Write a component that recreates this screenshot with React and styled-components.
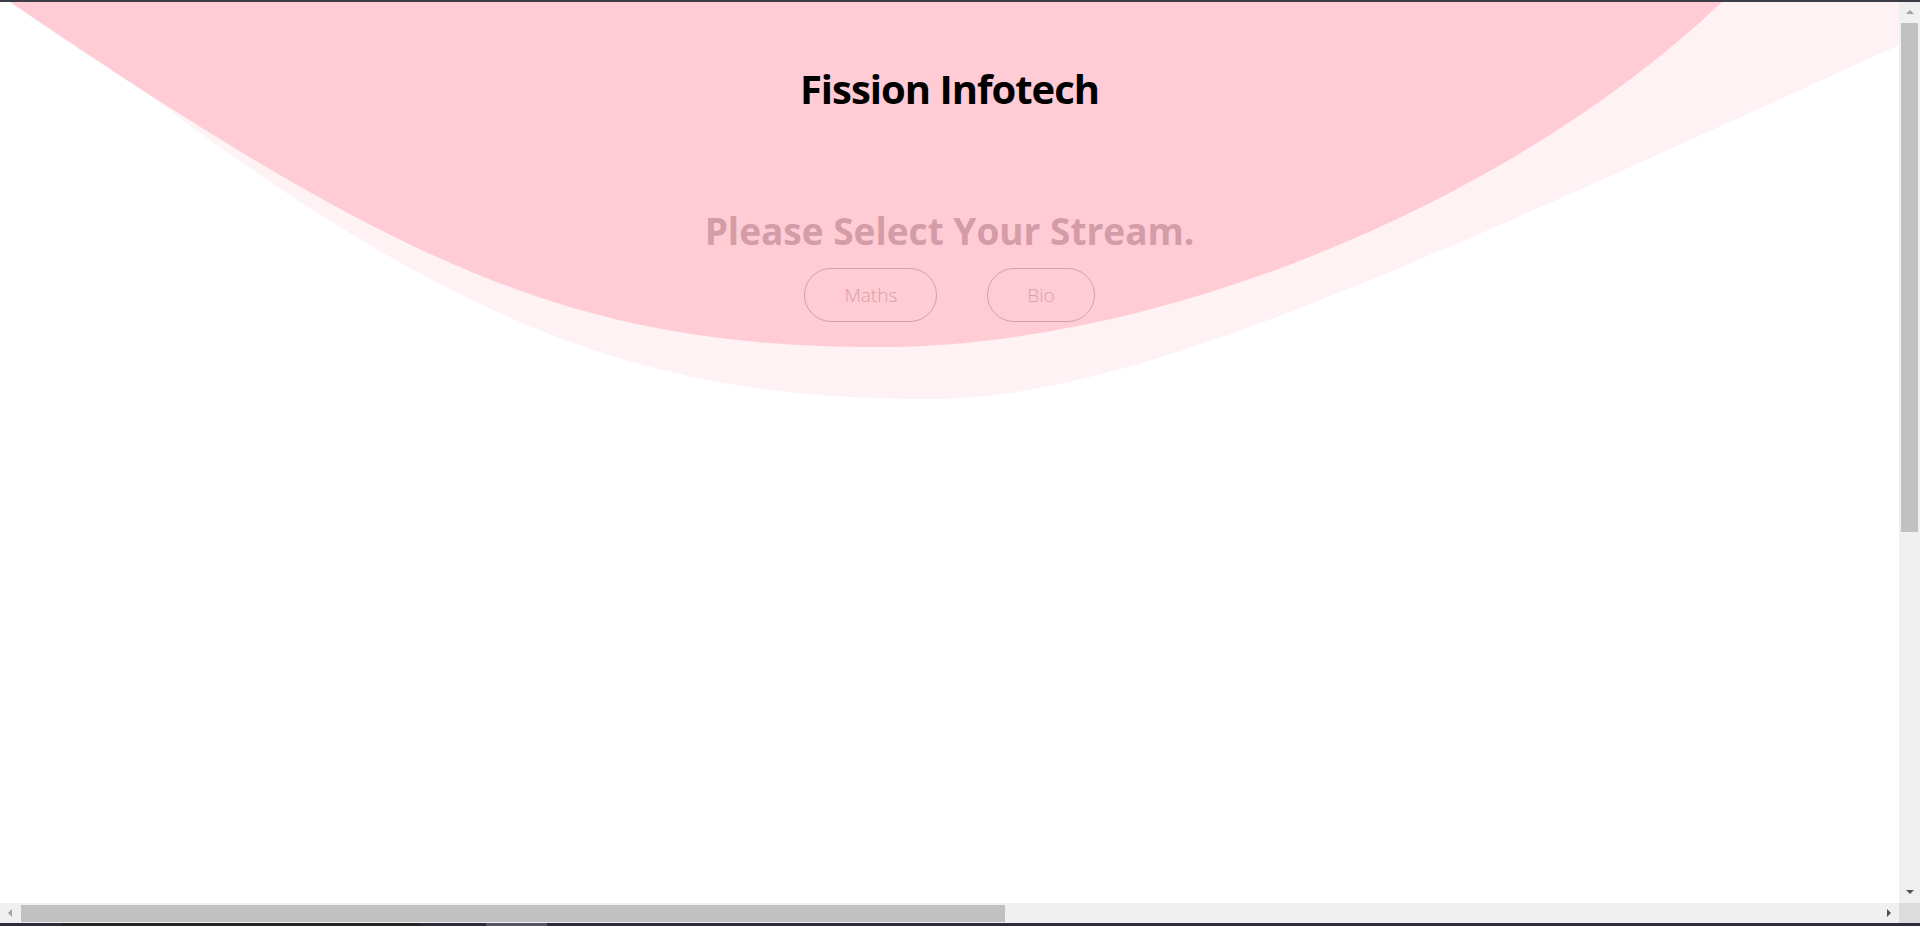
import React from "react";
import styled, { createGlobalStyle } from "styled-components";

const GlobalStyle = createGlobalStyle`
  html, body {
    margin: 0;
    padding: 0;
    background: #ffffff;
    overflow: hidden;
  }
  body {
    font-family: "Open Sans", "Noto Sans", sans-serif;
  }
`;

// browser window: top edge, viewport + vertical scrollbar, horizontal scrollbar, taskbar sliver
const Frame = styled.div`
  display: grid;
  grid-template-columns: 1fr 21px;
  grid-template-rows: 2px 1fr 20px 3px;
  width: 100vw;
  height: 100vh;
  overflow: hidden;
`;

const TopEdge = styled.div`
  grid-column: 1 / -1;
  background: #3c3c46;
`;

const Viewport = styled.div`
  position: relative;
  overflow: hidden;
  background: #fff;
`;

const Backdrop = styled.svg`
  position: absolute;
  top: 0;
  left: 0;
  width: 100%;
  height: 100%;
  pointer-events: none;
`;

const Content = styled.main`
  position: relative;
  z-index: 1;
  display: flex;
  flex-direction: column;
  align-items: center;
`;

const Title = styled.h1`
  margin: 67px 0 0;
  font-size: 40px;
  line-height: 1;
  font-weight: 700;
  letter-spacing: -1px;
  color: #000;
`;

const Prompt = styled.h2`
  margin: 103px 0 0;
  font-size: 37px;
  line-height: 1;
  font-weight: 700;
  color: #d39ca7;
`;

const Choices = styled.div`
  display: flex;
  gap: 50px;
  margin-top: 19px;
`;

const StreamButton = styled.button`
  height: 54px;
  padding: 0 39px;
  border: 1px solid #d3a0ab;
  border-radius: 27px;
  background: transparent;
  color: #d6a0ad;
  font-family: inherit;
  font-size: 19px;
  font-weight: 300;
  cursor: pointer;
`;

const VScroll = styled.div`
  display: flex;
  flex-direction: column;
  background: #f0f0f0;
`;

const HScroll = styled.div`
  display: flex;
  background: #f0f0f0;
`;

const ArrowCell = styled.div`
  flex: 0 0 ${(p) => p.$size}px;
  display: flex;
  align-items: center;
  justify-content: center;
`;

const Track = styled.div`
  flex: 1;
  display: flex;
  flex-direction: ${(p) => (p.$vertical ? "column" : "row")};
  padding: ${(p) => (p.$vertical ? "1px 2px 0" : "2px 0 1px 1px")};
`;

const Thumb = styled.div`
  flex: 0 0 ${(p) => p.$length}px;
  background: #c1c1c1;
`;

const Corner = styled.div`
  background: #dcdcdc;
`;

const Taskbar = styled.div`
  grid-column: 1 / -1;
  display: flex;
  background: #2e2b3c;
`;

const TaskItem = styled.div`
  margin-left: ${(p) => p.$offset}px;
  width: ${(p) => p.$width}px;
  background: ${(p) => p.$color};
`;

function Arrow({ dir, active }) {
  const shapes = {
    up: "0,4 4,0 8,4",
    down: "0,0 8,0 4,4",
    left: "4,0 4,8 0,4",
    right: "0,0 0,8 4,4",
  };
  const vertical = dir === "up" || dir === "down";
  return (
    <svg width={vertical ? 8 : 4} height={vertical ? 4 : 8}>
      <polygon points={shapes[dir]} fill={active ? "#505050" : "#a3a3a3"} />
    </svg>
  );
}

function Waves() {
  return (
    <Backdrop viewBox="0 0 1899 901" preserveAspectRatio="xMinYMin slice" aria-hidden="true">
      <path
        d="M10 0 L157 99 C487 347 680 397 930 397 C1130 397 1400 270 1899 43 L1980 0 Z"
        fill="#fff2f4"
      />
      <path
        d="M10 0 C410 272 580 345 880 345 C1150 345 1500 210 1722 0 Z"
        fill="#ffcbd5"
      />
    </Backdrop>
  );
}

export default function App() {
  const streams = ["Maths", "Bio"];

  return (
    <Frame>
      <GlobalStyle />
      <TopEdge />
      <Viewport>
        <Waves />
        <Content>
          <Title>Fission Infotech</Title>
          <Prompt>Please Select Your Stream.</Prompt>
          <Choices>
            {streams.map((s) => (
              <StreamButton key={s}>{s}</StreamButton>
            ))}
          </Choices>
        </Content>
      </Viewport>
      <VScroll>
        <ArrowCell $size={20}>
          <Arrow dir="up" />
        </ArrowCell>
        <Track $vertical>
          <Thumb $length={509} />
        </Track>
        <ArrowCell $size={22}>
          <Arrow dir="down" active />
        </ArrowCell>
      </VScroll>
      <HScroll>
        <ArrowCell $size={20}>
          <Arrow dir="left" />
        </ArrowCell>
        <Track>
          <Thumb $length={984} />
        </Track>
        <ArrowCell $size={20}>
          <Arrow dir="right" active />
        </ArrowCell>
      </HScroll>
      <Corner />
      <Taskbar>
        <TaskItem $offset={61} $width={359} $color="#242424" />
        <TaskItem $offset={66} $width={61} $color="#55556a" />
      </Taskbar>
    </Frame>
  );
}
